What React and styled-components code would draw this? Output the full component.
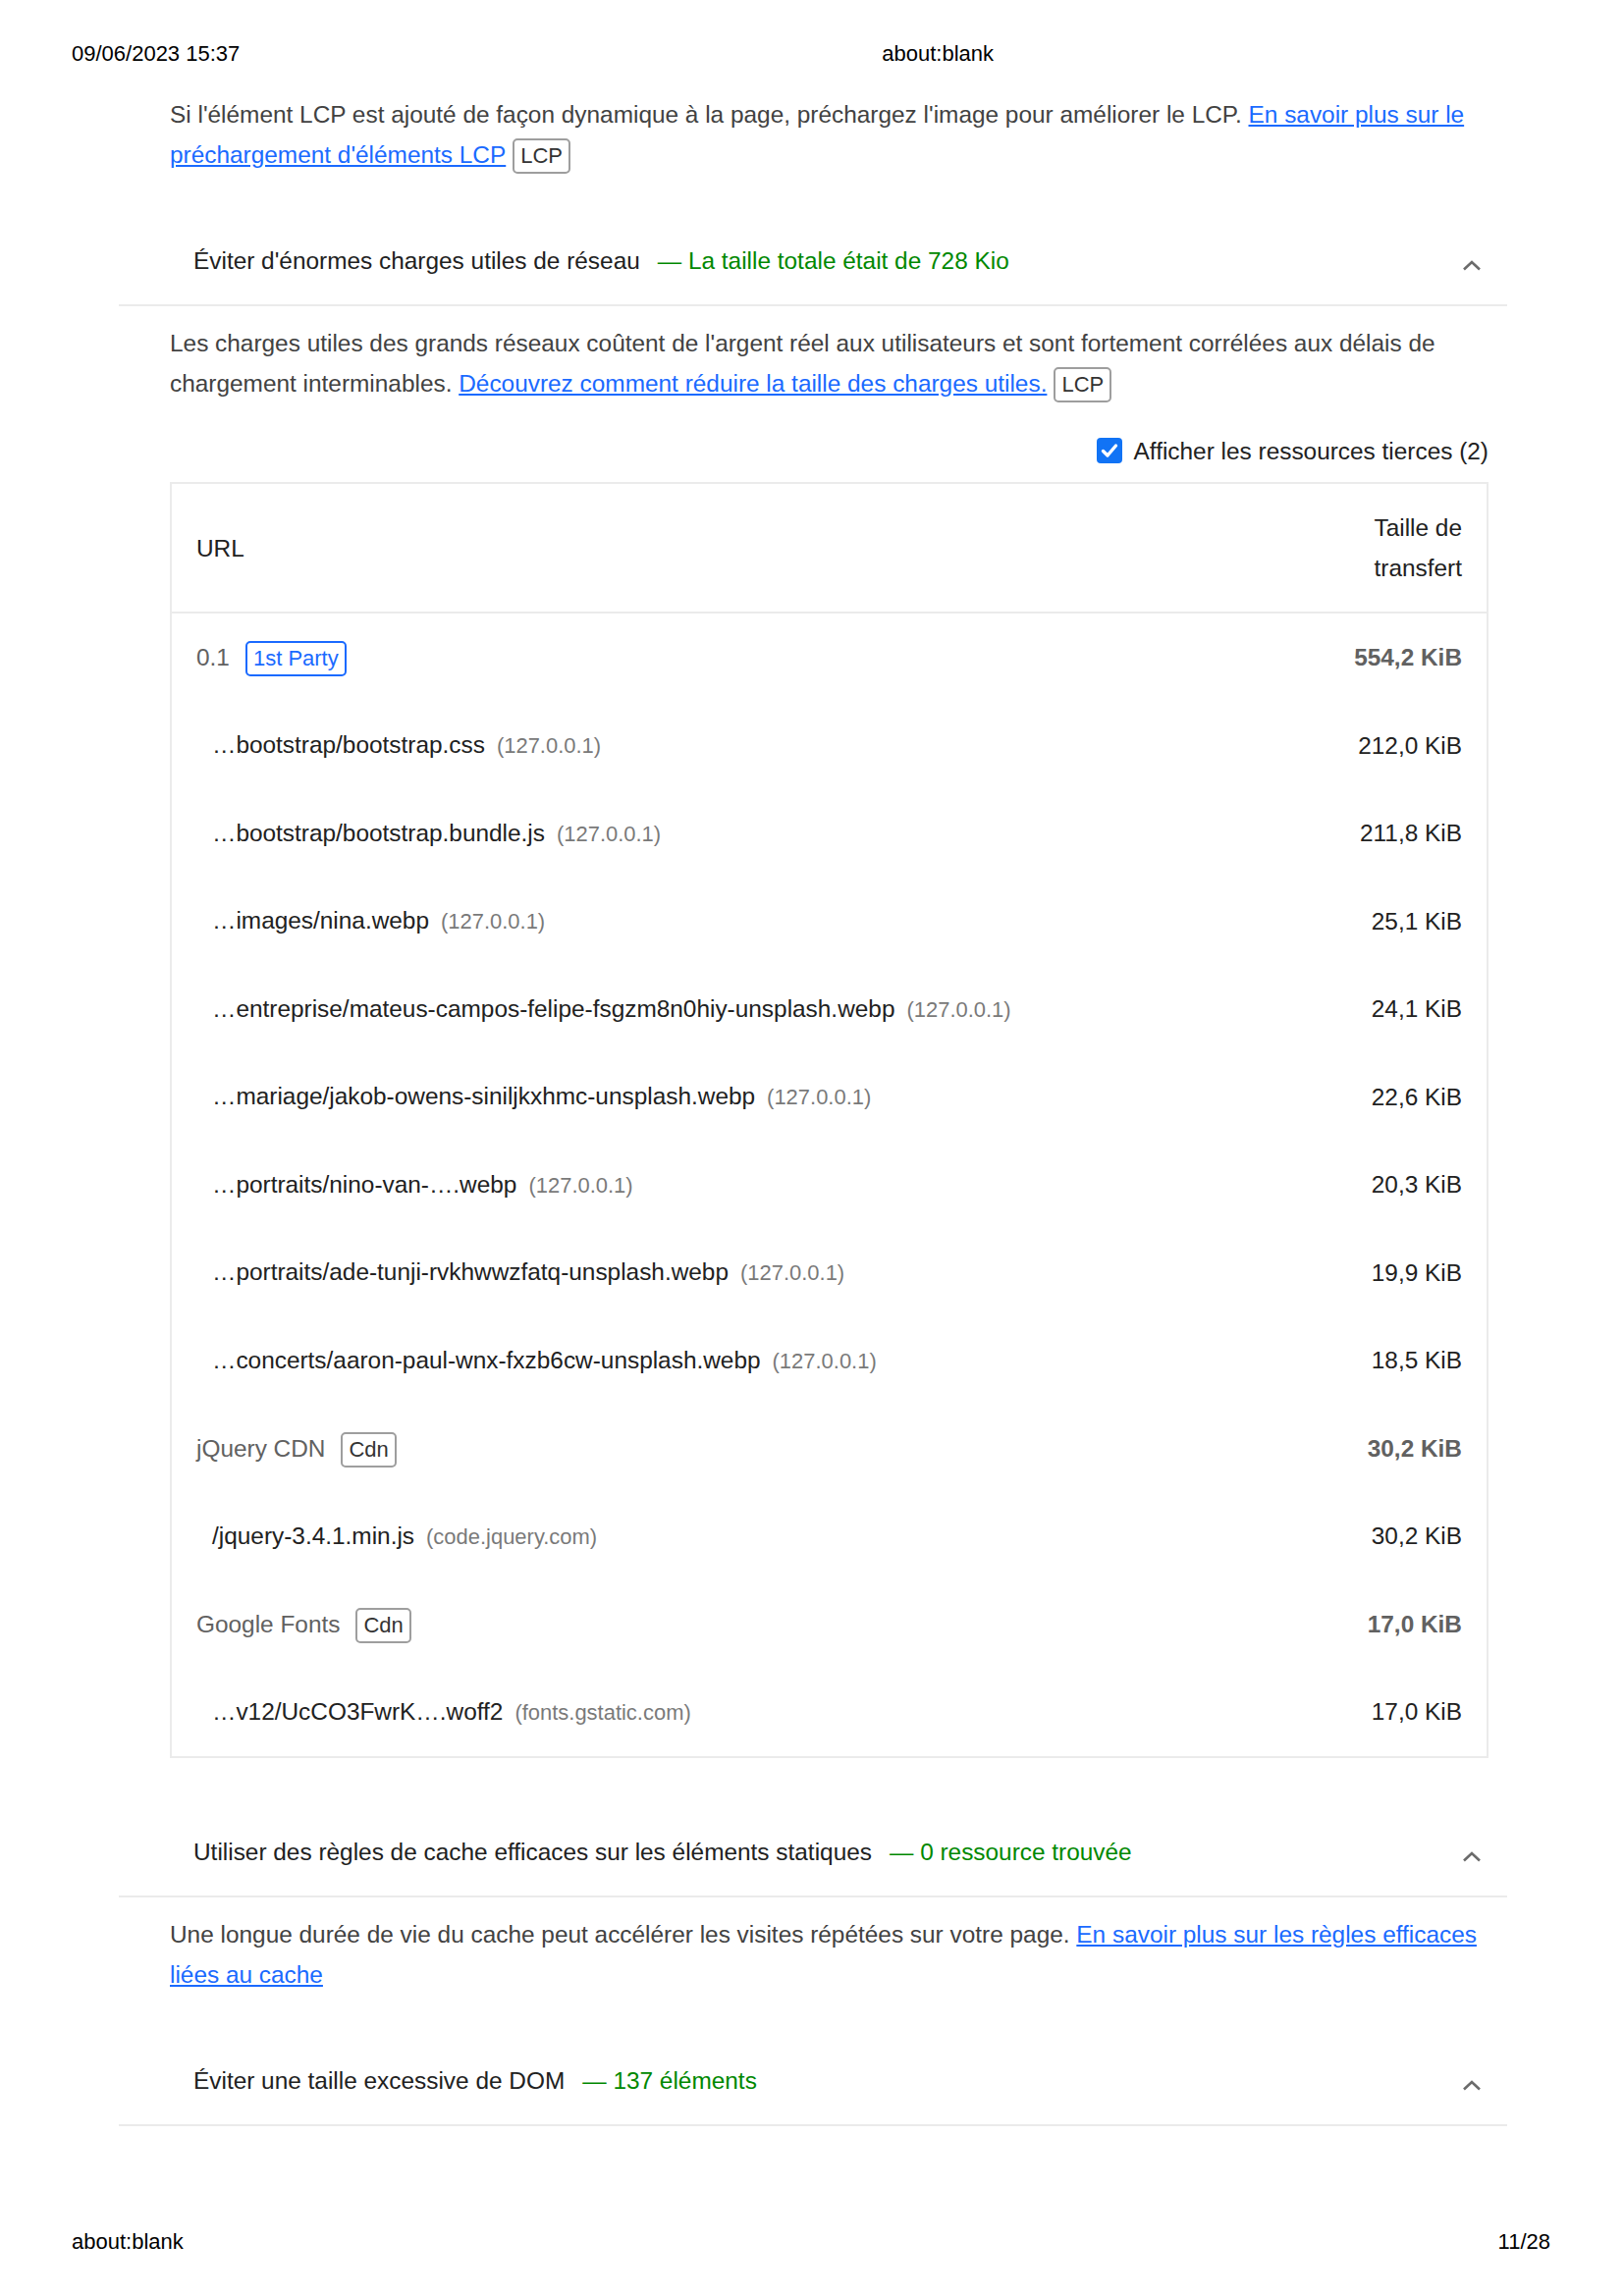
import styled, { createGlobalStyle } from 'styled-components';

const GlobalStyle = createGlobalStyle`
  html, body {
    margin: 0;
    padding: 0;
    background: #fff;
  }
  body {
    font-family: "Liberation Sans", Arial, sans-serif;
    -webkit-font-smoothing: antialiased;
  }
`;

const resources = [
  { group: true, name: '0.1', badge: '1st Party', party: true, size: '554,2 KiB' },
  { name: '…bootstrap/bootstrap.css', host: '(127.0.0.1)', size: '212,0 KiB' },
  { name: '…bootstrap/bootstrap.bundle.js', host: '(127.0.0.1)', size: '211,8 KiB' },
  { name: '…images/nina.webp', host: '(127.0.0.1)', size: '25,1 KiB' },
  { name: '…entreprise/mateus-campos-felipe-fsgzm8n0hiy-unsplash.webp', host: '(127.0.0.1)', size: '24,1 KiB' },
  { name: '…mariage/jakob-owens-siniljkxhmc-unsplash.webp', host: '(127.0.0.1)', size: '22,6 KiB' },
  { name: '…portraits/nino-van-….webp', host: '(127.0.0.1)', size: '20,3 KiB' },
  { name: '…portraits/ade-tunji-rvkhwwzfatq-unsplash.webp', host: '(127.0.0.1)', size: '19,9 KiB' },
  { name: '…concerts/aaron-paul-wnx-fxzb6cw-unsplash.webp', host: '(127.0.0.1)', size: '18,5 KiB' },
  { group: true, name: 'jQuery CDN', badge: 'Cdn', size: '30,2 KiB' },
  { name: '/jquery-3.4.1.min.js', host: '(code.jquery.com)', size: '30,2 KiB' },
  { group: true, name: 'Google Fonts', badge: 'Cdn', size: '17,0 KiB' },
  { name: '…v12/UcCO3FwrK….woff2', host: '(fonts.gstatic.com)', size: '17,0 KiB' },
];

function Chevron() {
  return (
    <ChevronIcon width="20" height="11" viewBox="0 0 20 11">
      <polyline points="2,9.5 10,2 18,9.5" fill="none" stroke="#6b6b6b" strokeWidth="2.6" />
    </ChevronIcon>
  );
}

function AuditHeader({ title, display }) {
  return (
    <Summary>
      <Title>{title}</Title>
      <DisplayText>— {display}</DisplayText>
      <Chevron />
    </Summary>
  );
}

export default function App() {
  return (
    <>
      <GlobalStyle />
      <Page>
        <PrintHeader>
          <span>09/06/2023 15:37</span>
          <PageTitle>about:blank</PageTitle>
        </PrintHeader>

        <Main>
          <Body $top={0}>
            <Description>
              Si l'élément LCP est ajouté de façon dynamique à la page, préchargez l'image pour améliorer le LCP.{' '}
              <Link href="#">En savoir plus sur le préchargement d'éléments LCP</Link><Adorn>LCP</Adorn>
            </Description>
          </Body>

          <AuditHeader title="Éviter d'énormes charges utiles de réseau" display="La taille totale était de 728 Kio" />
          <Body>
            <Description>
              Les charges utiles des grands réseaux coûtent de l'argent réel aux utilisateurs et sont fortement corrélées aux délais de chargement interminables.{' '}
              <Link href="#">Découvrez comment réduire la taille des charges utiles.</Link><Adorn>LCP</Adorn>
            </Description>
            <FilterRow>
              <CheckBox>
                <svg width="26" height="26" viewBox="0 0 26 26">
                  <polyline points="6.5,13.5 11,18 19.5,8" fill="none" stroke="#fff" strokeWidth="3.4" strokeLinecap="round" strokeLinejoin="round" />
                </svg>
              </CheckBox>
              Afficher les ressources tierces (2)
            </FilterRow>
            <Table>
              <thead>
                <tr>
                  <Th>URL</Th>
                  <Th $right>Taille de<br />transfert</Th>
                </tr>
              </thead>
              <tbody>
                {resources.map((r) => (
                  <tr key={r.name + r.size}>
                    <UrlCell $group={r.group}>
                      {r.name}
                      {r.badge && <Adorn $party={r.party} $gap>{r.badge}</Adorn>}
                      {r.host && <Host>{r.host}</Host>}
                    </UrlCell>
                    <SizeCell $group={r.group}>{r.size}</SizeCell>
                  </tr>
                ))}
              </tbody>
            </Table>
          </Body>

          <AuditHeader title="Utiliser des règles de cache efficaces sur les éléments statiques" display="0 ressource trouvée" />
          <Body>
            <Description>
              Une longue durée de vie du cache peut accélérer les visites répétées sur votre page.{' '}
              <Link href="#">En savoir plus sur les règles efficaces liées au cache</Link>
            </Description>
          </Body>

          <AuditHeader title="Éviter une taille excessive de DOM" display="137 éléments" />
        </Main>

        <PrintFooter>
          <span>about:blank</span>
          <span>11/28</span>
        </PrintFooter>
      </Page>
    </>
  );
}

const Page = styled.div`
  width: 1653px;
  height: 2339px;
  overflow: hidden;
  display: flex;
  flex-direction: column;
  box-sizing: border-box;
`;

const PrintHeader = styled.header`
  display: flex;
  padding: 41.5px 73px 0;
  font-size: 22px;
  line-height: 26px;
  color: #000;
`;

const PageTitle = styled.span`
  margin-left: 654px;
`;

const Main = styled.main`
  margin-left: 121px;
  width: 1414px;
  padding-top: 28px;
  font-size: 24.4px;
  line-height: 41px;
  color: #212121;
`;

const Body = styled.div`
  padding: ${(p) => (p.$top ?? 17)}px 19px 43px 52px;
`;

const Description = styled.p`
  margin: 0;
  color: #424242;
`;

const Link = styled.a`
  color: #1a6aff;
  text-decoration: underline;
`;

const Adorn = styled.span`
  display: inline-block;
  font-size: 22px;
  line-height: 1.1;
  padding: 4px 6px;
  margin-left: ${(p) => (p.$gap ? '16px' : '7px')};
  border: 2px solid ${(p) => (p.$party ? '#1a6aff' : '#9e9e9e')};
  border-radius: 5px;
  color: ${(p) => (p.$party ? '#1a6aff' : '#333')};
`;

const Summary = styled.div`
  display: flex;
  align-items: flex-start;
  padding: 24px 26px 24px 76px;
  border-bottom: 2px solid #ebebeb;
  font-size: 24.4px;
  line-height: 41px;
  color: #212121;
`;

const Title = styled.span``;

const DisplayText = styled.span`
  margin-left: 18px;
  color: #080;
`;

const ChevronIcon = styled.svg`
  margin-left: auto;
  margin-top: 20px;
  display: block;
`;

const FilterRow = styled.div`
  margin-top: 28px;
  display: flex;
  align-items: center;
  justify-content: flex-end;
  gap: 12px;
  color: #212121;
`;

const CheckBox = styled.span`
  width: 26px;
  height: 26px;
  border-radius: 4px;
  background: #1173f5;
  display: inline-flex;
`;

const Table = styled.table`
  margin-top: 11.5px;
  margin-bottom: 8px;
  width: 100%;
  border-collapse: separate;
  border-spacing: 0;
  border: 2px solid #ebebeb;
  color: #212121;
`;

const Th = styled.th`
  padding: 24px 25px;
  font-weight: normal;
  text-align: ${(p) => (p.$right ? 'right' : 'left')};
  border-bottom: 2px solid #ebebeb;
  white-space: nowrap;
`;

const UrlCell = styled.td`
  box-sizing: border-box;
  height: 89.5px;
  padding: 0 25px 0 ${(p) => (p.$group ? '25px' : '41px')};
  color: ${(p) => (p.$group ? '#616161' : '#212121')};
  white-space: nowrap;
`;

const SizeCell = styled.td`
  box-sizing: border-box;
  height: 89.5px;
  padding: 0 25px;
  text-align: right;
  white-space: nowrap;
  font-weight: ${(p) => (p.$group ? 'bold' : 'normal')};
  color: ${(p) => (p.$group ? '#616161' : '#212121')};
`;

const Host = styled.span`
  margin-left: 12px;
  font-size: 90%;
  opacity: 0.6;
`;

const PrintFooter = styled.footer`
  margin-top: auto;
  display: flex;
  justify-content: space-between;
  padding: 0 74px 42px 73px;
  font-size: 22px;
  line-height: 26px;
  color: #000;
`;
